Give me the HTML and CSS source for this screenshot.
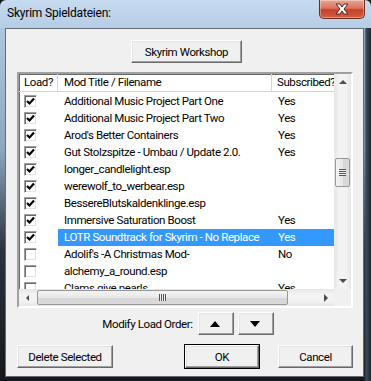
FILE: index.html
```html
<!DOCTYPE html>
<html lang="de">
<head>
  <meta charset="UTF-8" />
  <title>Skyrim Spieldateien</title>
  <link rel="stylesheet" href="styles.css">
</head>
<body>

  <div class="window">
    <div class="titlebar">
      <span class="title">Skyrim Spieldateien:</span>
      <div class="close">
        <svg width="18" height="12" viewBox="0 0 18 12">
          <path d="M3 1 L7 1 L9 4 L11 1 L15 1 L11 6 L15 11 L11 11 L9 8 L7 11 L3 11 L7 6 Z" fill="#fff" stroke="#5b2418" stroke-width="1"/>
        </svg>
      </div>
    </div>

    <div class="client">
      <div class="top-row">
        <button class="btn workshop">Skyrim Workshop</button>
      </div>

      <!-- Mod list -->
      <div class="listbox">
        <div class="listview">
          <div class="row head">
            <div class="cell">Load?</div>
            <div class="cell">Mod Title / Filename</div>
            <div class="cell">Subscribed?</div>
          </div>
          <div class="row"><div class="cell"><span class="check on"></span></div><div class="cell">Additional Music Project Part One</div><div class="cell">Yes</div></div>
          <div class="row"><div class="cell"><span class="check on"></span></div><div class="cell">Additional Music Project Part Two</div><div class="cell">Yes</div></div>
          <div class="row"><div class="cell"><span class="check on"></span></div><div class="cell">Arod's Better Containers</div><div class="cell">Yes</div></div>
          <div class="row"><div class="cell"><span class="check on"></span></div><div class="cell">Gut Stolzspitze - Umbau / Update 2.0.</div><div class="cell">Yes</div></div>
          <div class="row"><div class="cell"><span class="check on"></span></div><div class="cell">longer_candlelight.esp</div><div class="cell"></div></div>
          <div class="row"><div class="cell"><span class="check on"></span></div><div class="cell">werewolf_to_werbear.esp</div><div class="cell"></div></div>
          <div class="row"><div class="cell"><span class="check on"></span></div><div class="cell">BessereBlutskaldenklinge.esp</div><div class="cell"></div></div>
          <div class="row"><div class="cell"><span class="check on"></span></div><div class="cell">Immersive Saturation Boost</div><div class="cell">Yes</div></div>
          <div class="row selected"><div class="cell"><span class="check on"></span></div><div class="cell">LOTR Soundtrack for Skyrim - No Replace</div><div class="cell">Yes</div></div>
          <div class="row"><div class="cell"><span class="check"></span></div><div class="cell">Adolif's -A Christmas Mod-</div><div class="cell">No</div></div>
          <div class="row"><div class="cell"><span class="check"></span></div><div class="cell">alchemy_a_round.esp</div><div class="cell"></div></div>
          <div class="row"><div class="cell"><span class="check"></span></div><div class="cell">Clams give pearls</div><div class="cell">Yes</div></div>
        </div>

        <div class="vscroll">
          <div class="arrow up"></div>
          <div class="track">
            <div class="thumb"><span class="grip"></span></div>
          </div>
          <div class="arrow down"></div>
        </div>

        <div class="hscroll">
          <div class="arrow left"></div>
          <div class="track">
            <div class="thumb"><span class="grip"></span></div>
          </div>
          <div class="arrow right"></div>
        </div>

        <div class="corner"></div>
      </div>

      <div class="order-row">
        <span>Modify Load Order:</span>
        <button class="btn small"><span class="tri up"></span></button>
        <button class="btn small"><span class="tri down"></span></button>
      </div>

      <div class="bottom-row">
        <button class="btn delete">Delete Selected</button>
        <div class="right-buttons">
          <button class="btn ok">OK</button>
          <button class="btn cancel">Cancel</button>
        </div>
      </div>
    </div>
  </div>

</body>
</html>
```

FILE: styles.css
```css
* {
  box-sizing: border-box;
  font-family: Roboto, 'Noto Sans', sans-serif;
  letter-spacing: -0.4px;
}
body {
  margin: 0;
  width: 371px;
  height: 381px;
  overflow: hidden;
  background: #16191d;
}
.window {
  width: 371px;
  height: 381px;
  display: flex;
  flex-direction: column;
  border-radius: 6px 6px 0 0;
  background:
    linear-gradient(to bottom, #c6dbef 0px, #b5cde6 28px, rgba(0,0,0,0) 28px),
    linear-gradient(to right, rgba(0,0,0,0) 364px, #3a4a5c 366px, #202a35 371px),
    linear-gradient(to bottom, #aec7df 28px, #8ea6bd 150px, #2b333c 250px, #15181c 381px);
}
.titlebar {
  height: 28px;
  display: flex;
  justify-content: space-between;
  align-items: flex-start;
  padding: 0 6px 0 7px;
}
.title {
  font-size: 12px;
  letter-spacing: -0.2px;
  color: #000;
  margin-top: 6px;
}
.close {
  width: 46px;
  height: 19px;
  border: 1px solid #6b2b1f;
  border-top: none;
  border-radius: 0 0 5px 5px;
  background: linear-gradient(to bottom, #e9a595 0%, #d9745f 45%, #c4402b 55%, #d0603f 100%);
  display: flex;
  justify-content: center;
  align-items: center;
  box-shadow: inset 0 0 0 1px rgba(255, 255, 255, 0.35);
}
.client {
  margin: 0 7px 4px 5px;
  flex: 1;
  background: #f0f0f0;
  border: 1px solid #646b74;
  padding: 11px 10px 0 11px;
  display: flex;
  flex-direction: column;
}
.btn {
  font-size: 11.5px;
  color: #000;
  background: #f0f0f0;
  height: 23px;
  padding: 0;
  border: 1px solid;
  border-color: #fff #696969 #696969 #fff;
  box-shadow: inset -1px -1px 0 #a0a0a0, inset 1px 1px 0 #e3e3e3;
}
.top-row {
  display: flex;
  justify-content: center;
  margin-bottom: 9px;
  padding-left: 3px;
}
.workshop {
  width: 111px;
}

/* list */
.listbox {
  height: 236px;
  border: 2px solid;
  border-color: #a0a0a0 #fff #fff #a0a0a0;
  box-shadow: inset 1px 1px 0 #696969;
  background: #fff;
  display: grid;
  grid-template-columns: 1fr 17px;
  grid-template-rows: 1fr 17px;
}
.listview {
  overflow: hidden;
  font-size: 11.5px;
  color: #000;
}
.row {
  display: grid;
  grid-template-columns: 39px 214px 1fr;
  height: 17px;
  align-items: center;
}
.row .cell {
  padding-left: 6px;
  white-space: nowrap;
  overflow: hidden;
  line-height: 17px;
}
.row.head {
  height: 18px;
  margin-bottom: 1px;
  border-bottom: 1px solid #d5d5d5;
}
.row.head .cell {
  border-right: 1px solid #d5d5d5;
  line-height: 17px;
}
.row.head .cell:first-child {
  padding-left: 5px;
}
.row.head .cell:last-child {
  border-right: none;
  padding-left: 5px;
  overflow: visible;
}
.row.selected .cell + .cell {
  background: #3399ff;
  color: #fff;
}
.check {
  display: block;
  width: 13px;
  height: 13px;
  margin-left: -1px;
  background: #fff;
  border: 1px solid;
  border-color: #a0a0a0 #fff #fff #a0a0a0;
  box-shadow: inset 1px 1px 0 #696969, inset -1px -1px 0 #e3e3e3;
}
.check.on {
  background: #fff url("data:image/svg+xml,%3Csvg xmlns='http://www.w3.org/2000/svg' width='11' height='11'%3E%3Cpath d='M2 5 L4.5 7.5 L9 2.5' fill='none' stroke='%23000' stroke-width='2.2'/%3E%3C/svg%3E") no-repeat 0 0;
}

/* scrollbars */
.vscroll, .hscroll {
  display: flex;
  background: #f0f0f0;
}
.vscroll {
  flex-direction: column;
  background: linear-gradient(to right, #e6e6e6, #f3f3f3 30%, #f3f3f3 70%, #e6e6e6);
}
.hscroll {
  background: linear-gradient(to bottom, #e6e6e6, #f3f3f3 30%, #f3f3f3 70%, #e6e6e6);
}
.arrow {
  width: 17px;
  height: 17px;
  flex: none;
  display: flex;
  justify-content: center;
  align-items: center;
}
.arrow::after {
  content: "";
  border: 4px solid transparent;
}
.arrow.up::after { border-bottom-color: #4d4d4d; border-top-width: 0; margin-top: -1px; }
.arrow.down::after { border-top-color: #4d4d4d; border-bottom-width: 0; }
.arrow.left::after { border-right-color: #4d4d4d; border-left-width: 0; border-width: 3px 3px 3px 0; }
.arrow.right::after { border-left-color: #4d4d4d; border-right-width: 0; border-width: 4px 0 4px 4px; }
.track {
  flex: 1;
  display: flex;
}
.vscroll .track {
  flex-direction: column;
}
.thumb {
  border: 1px solid #979797;
  border-radius: 2px;
  display: flex;
  justify-content: center;
  align-items: center;
}
.vscroll .thumb {
  margin: 67px 1px 0 1px;
  height: 29px;
  background: linear-gradient(to right, #f3f3f3, #e8e8e8 50%, #d6d6d6 51%, #dadada);
}
.hscroll .thumb {
  margin: 1px 0 1px 1px;
  width: 251px;
  background: linear-gradient(to bottom, #f3f3f3, #e8e8e8 50%, #d6d6d6 51%, #dadada);
}
.vscroll .grip {
  width: 7px;
  height: 7px;
  background: repeating-linear-gradient(to bottom, #555 0, #555 1px, #eee 1px, #eee 2px);
}
.hscroll .grip {
  width: 7px;
  height: 7px;
  background: repeating-linear-gradient(to right, #555 0, #555 1px, #eee 1px, #eee 2px);
}
.corner {
  background: #f0f0f0;
}

/* buttons below list */
.order-row {
  display: flex;
  justify-content: center;
  align-items: center;
  gap: 4px;
  margin-top: 4px;
  font-size: 11.5px;
  padding-left: 6px;
}
.order-row span:first-child {
  margin-right: 1px;
}
.small {
  width: 36px;
  display: flex;
  justify-content: center;
  align-items: center;
}
.tri {
  display: block;
  border: 5px solid transparent;
}
.tri.up { border-bottom: 6px solid #000; border-top-width: 0; }
.tri.down { border-top: 6px solid #000; border-bottom-width: 0; }
.bottom-row {
  display: flex;
  justify-content: space-between;
  margin-top: 10px;
}
.delete {
  width: 96px;
}
.right-buttons {
  display: flex;
  gap: 19px;
}
.ok {
  width: 74px;
  outline: 1px solid #000;
  outline-offset: 0;
}
.cancel {
  width: 75px;
}
```
